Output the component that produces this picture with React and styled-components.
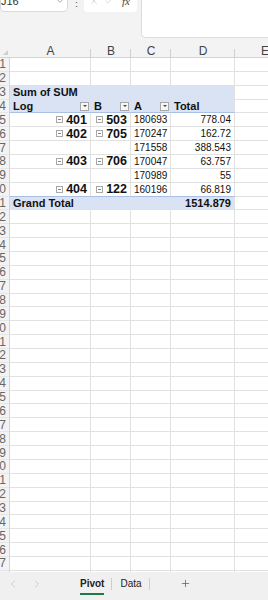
import React from 'react'
import styled, { createGlobalStyle } from 'styled-components'
import { ChevronDown, ChevronLeft, ChevronRight, Plus, X, Check } from 'lucide-react'

const GlobalStyle = createGlobalStyle`
  body {
    margin: 0;
    font-family: "Liberation Sans", Arial, sans-serif;
  }
  * { box-sizing: border-box; }
`

const COLS = '10px 81px 40px 40px 64px 60px'
const BAND = '#dae3f3'
const BAND_LINE = '#a9bfe3'
const GRID = '#e1e1e1'

const Frame = styled.div`
  width: 268px;
  height: 600px;
  overflow: hidden;
  background: #f3f3f3;
  display: flex;
  flex-direction: column;
`

const TopBar = styled.div`
  height: 38px;
  flex-shrink: 0;
  display: flex;
  align-items: flex-start;
`

const NameBox = styled.div`
  width: 68px;
  height: 22px;
  margin-top: -10px;
  background: #fff;
  border: 1px solid #d9d9d9;
  border-radius: 4px;
  display: flex;
  align-items: center;
  justify-content: space-between;
  padding: 0 2px 0 0;
  font-size: 11px;
  color: #333;
  svg { color: #777; }
`

const Dots = styled.div`
  width: 16px;
  margin-top: -3px;
  text-align: center;
  font-size: 11px;
  color: #666;
`

const FxBox = styled.div`
  width: 53px;
  height: 22px;
  margin-top: -10px;
  background: #fff;
  border-radius: 4px;
  display: flex;
  align-items: center;
  gap: 5px;
  padding-left: 5px;
  svg { color: #c4c4c4; }
`

const Fx = styled.span`
  font-family: "Liberation Serif", serif;
  font-style: italic;
  font-size: 11px;
  color: #444;
  margin-left: 3px;
`

const FormulaInput = styled.div`
  flex: 1;
  height: 38px;
  margin-left: 4px;
  background: #fff;
  border: 1px solid #dcdcdc;
  border-top: none;
  border-right: none;
  border-bottom-left-radius: 5px;
`

const Sheet = styled.div`
  flex: 1;
  margin-top: 6px;
  overflow: hidden;
  background: #fff;
`

const HeaderRow = styled.div`
  display: grid;
  grid-template-columns: ${COLS};
  height: 14px;
  background: #f3f3f3;
  border-bottom: 1px solid #d4d4d4;
`

const ColHead = styled.div`
  position: relative;
  display: flex;
  align-items: center;
  justify-content: center;
  font-size: 12px;
  color: #444;
  &::after {
    content: '';
    position: absolute;
    right: 0;
    bottom: 0;
    width: 1px;
    height: 9px;
    background: #d0d0d0;
  }
`

const Corner = styled.div`
  position: relative;
  &::before {
    content: '';
    position: absolute;
    left: 3px;
    bottom: 3px;
    border-left: 5px solid transparent;
    border-bottom: 5px solid #cfcfcf;
  }
`

const Row = styled.div`
  display: grid;
  grid-template-columns: ${COLS};
  height: 13.86px;
`

const RowNum = styled.div`
  display: flex;
  align-items: center;
  justify-content: flex-end;
  padding-right: 3px;
  overflow: hidden;
  white-space: nowrap;
  background: #f3f3f3;
  border-right: 1px solid #d4d4d4;
  border-bottom: 1px solid #e6e6e6;
  font-size: 12px;
  color: #666;
`

const Cell = styled.div`
  grid-column: ${p => (p.$span ? `span ${p.$span}` : 'auto')};
  display: flex;
  align-items: center;
  justify-content: ${p => (p.$right ? 'flex-end' : 'flex-start')};
  gap: 2px;
  padding: ${p => (p.$right ? '0 3px 0 0' : '0 0 0 3px')};
  overflow: hidden;
  white-space: nowrap;
  background: ${p => (p.$band ? BAND : '#fff')};
  border-right: 1px solid ${p => (p.$band && !p.$edge ? BAND : GRID)};
  border-bottom: 1px solid ${p => p.$under || GRID};
  font-size: ${p => (p.$big ? '12.5px' : p.$bold ? '11px' : '10px')};
  font-weight: ${p => (p.$bold || p.$big ? 700 : 400)};
  color: #111;
`

const Filter = styled.span`
  margin-left: auto;
  width: 9px;
  height: 9px;
  border: 1px solid #a8a8a8;
  background: #f7f7f7;
  display: flex;
  align-items: center;
  justify-content: center;
  &::before {
    content: '';
    border-left: 2px solid transparent;
    border-right: 2px solid transparent;
    border-top: 2px solid #444;
  }
`

const HeadCell = styled(Cell)`
  padding-right: 1px;
`

const Collapse = styled.span`
  position: relative;
  width: 7px;
  height: 7px;
  border: 1px solid #a8a8a8;
  margin-right: 1px;
  &::after {
    content: '';
    position: absolute;
    left: 1px;
    right: 1px;
    top: 2px;
    height: 1px;
    background: #888;
  }
`

const TabBar = styled.div`
  height: 28px;
  flex-shrink: 0;
  display: flex;
  align-items: flex-start;
  padding: 6px 0 0 7px;
  background: #f0f0f0;
`

const Nav = styled.span`
  display: flex;
  width: 12px;
  height: 12px;
  margin-right: 12px;
  color: #bdbdbd;
`

const Tabs = styled.div`
  display: flex;
  align-items: flex-start;
  margin-left: 17px;
`

const Tab = styled.div`
  padding: 0 7px 0 8px;
  border-right: 1px solid #cfcfcf;
  height: 12px;
  line-height: 12px;
  font-size: 10px;
  font-weight: ${p => (p.$active ? 700 : 400)};
  color: #222;
`

const TabLabel = styled.span`
  display: inline-block;
  padding-bottom: 3px;
  border-bottom: 2px solid ${p => (p.$active ? '#1e7b48' : 'transparent')};
`

const AddSheet = styled.span`
  display: flex;
  margin-left: 30px;
  color: #555;
`

const columns = ['A', 'B', 'C', 'D', 'E']

const body = [
  { a: '401', b: '503', c: '180693', d: '778.04' },
  { a: '402', b: '705', c: '170247', d: '162.72' },
  { c: '171558', d: '388.543' },
  { a: '403', b: '706', c: '170047', d: '63.757' },
  { c: '170989', d: '55' },
  { a: '404', b: '122', c: '160196', d: '66.819' },
]

const RowLabel = ({ value }) =>
  value ? (
    <>
      <Collapse />
      {value}
    </>
  ) : null

function rowCells(n) {
  if (n === 3) {
    return (
      <>
        <Cell $band $bold $span={4} $edge $under={BAND}>Sum of SUM</Cell>
        <Cell />
      </>
    )
  }
  if (n === 4) {
    return (
      <>
        <HeadCell $band $bold $under={BAND_LINE}>Log<Filter /></HeadCell>
        <HeadCell $band $bold $under={BAND_LINE}>B<Filter /></HeadCell>
        <HeadCell $band $bold $under={BAND_LINE}>A<Filter /></HeadCell>
        <Cell $band $bold $edge $under={BAND_LINE}>Total</Cell>
        <Cell />
      </>
    )
  }
  if (n >= 5 && n <= 10) {
    const r = body[n - 5]
    const under = n === 10 ? BAND_LINE : GRID
    return (
      <>
        <Cell $right $big $under={under}><RowLabel value={r.a} /></Cell>
        <Cell $right $big $under={under}><RowLabel value={r.b} /></Cell>
        <Cell $under={under}>{r.c}</Cell>
        <Cell $right $under={under}>{r.d}</Cell>
        <Cell />
      </>
    )
  }
  if (n === 11) {
    return (
      <>
        <Cell $band $bold $span={3}>Grand Total</Cell>
        <Cell $band $bold $right $edge>1514.879</Cell>
        <Cell />
      </>
    )
  }
  return columns.map(c => <Cell key={c} />)
}

const rows = Array.from({ length: 40 }, (_, i) => i + 1)

export default function App() {
  return (
    <Frame>
      <GlobalStyle />
      <TopBar>
        <NameBox>
          <span>J16</span>
          <ChevronDown size={10} strokeWidth={1.5} />
        </NameBox>
        <Dots>⋮</Dots>
        <FxBox>
          <X size={10} strokeWidth={1.5} />
          <Check size={10} strokeWidth={1.5} />
          <Fx>fx</Fx>
        </FxBox>
        <FormulaInput />
      </TopBar>
      <Sheet>
        <HeaderRow>
          <Corner />
          {columns.map(c => <ColHead key={c}>{c}</ColHead>)}
        </HeaderRow>
        {rows.map(n => (
          <Row key={n}>
            <RowNum>{n}</RowNum>
            {rowCells(n)}
          </Row>
        ))}
      </Sheet>
      <TabBar>
        <Nav><ChevronLeft size={12} strokeWidth={1.5} /></Nav>
        <Nav><ChevronRight size={12} strokeWidth={1.5} /></Nav>
        <Tabs>
          <Tab $active><TabLabel $active>Pivot</TabLabel></Tab>
          <Tab>Data</Tab>
        </Tabs>
        <AddSheet><Plus size={11} strokeWidth={1.5} /></AddSheet>
      </TabBar>
    </Frame>
  )
}
